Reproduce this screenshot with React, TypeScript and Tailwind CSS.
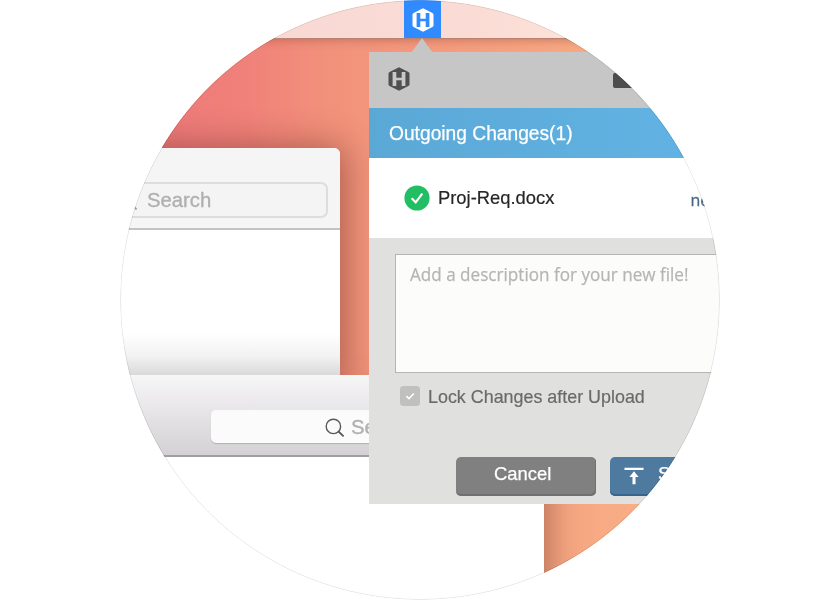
import React from "react";

function HexLogo({ color, letter, className }: { color: string; letter: string; className: string }) {
  return (
    <svg viewBox="0 0 22 24" className={className}>
      <path d="M11 0.2 20.4 5Q21.5 5.6 21.5 6.8V17.2Q21.5 18.4 20.4 19L11 23.8 1.6 19Q0.5 18.4 0.5 17.2V6.8Q0.5 5.6 1.6 5Z" fill={color} />
      <path d="M4.6 4.9H8.3V10.7H13.7V4.9H17.4V19.1H13.7V13.3H8.3V19.1H4.6Z" fill={letter} />
    </svg>
  );
}

function SearchGlyph({ className }: { className: string }) {
  return (
    <svg viewBox="0 0 20 20" className={className} fill="none" stroke="currentColor" strokeWidth="1.4">
      <circle cx="8.4" cy="8.4" r="7.2" />
      <path d="M13.5 13.5 18.6 18.4" strokeWidth="1.8" />
    </svg>
  );
}

function FinderWindow() {
  return (
    <div className="absolute -left-10 top-[148px] flex h-[232px] w-[259.5px] flex-col overflow-hidden rounded-t-[6px] bg-white shadow-[0_4px_34px_6px_rgba(80,30,20,0.42)]">
      <div className="flex h-[82px] shrink-0 items-start border-b-2 border-[#c3c3c3] bg-[#f5f5f5] pl-[42px] pt-[34px]">
        <div className="flex h-9 w-[206px] items-center rounded-[7px] border-2 border-[#dddddd] bg-[#f4f4f4]">
          <SearchGlyph className="-ml-1.5 mt-0.5 size-5 shrink-0 text-[#a0a0a0]" />
          <span className="ml-[9px] mt-px text-[20.3px] leading-none text-[#b0b0b0] [-webkit-text-stroke:0.35px_#b0b0b0]">Search</span>
        </div>
      </div>
      <div className="flex-1 bg-[linear-gradient(to_bottom,#fff_0,#fff_103px,#f2f2f2_126px,#d8d8d8_146px)]" />
    </div>
  );
}

function BrowserWindow() {
  return (
    <div className="absolute left-0 top-[374.5px] flex h-[225.5px] w-[424px] flex-col">
      {/* Shadow cast on the desktop to the right of the window */}
      <div className="absolute inset-0 -z-10 shadow-[0_30px_34px_0_rgba(80,30,20,0.5)]" />
      <div className="flex h-[82px] shrink-0 items-start border-b-2 border-[#a09fa0] bg-[linear-gradient(to_bottom,#f7f6f7,#e7e5e8_45%,#d3d1d4)] pl-[91px] pt-[35.5px]">
        <div className="flex h-[33px] w-[330px] items-center rounded-[5px] bg-[#fbfbfb] shadow-[0_1px_1px_rgba(0,0,0,0.18)]">
          <SearchGlyph className="ml-[113.5px] mt-0.5 size-5 shrink-0 text-[#58585a]" />
          <span className="ml-[6.5px] mt-0.5 text-[20.3px] leading-none text-[#b0b0b0] [-webkit-text-stroke:0.35px_#b0b0b0]">Search</span>
        </div>
      </div>
      <div className="flex-1 bg-white" />
    </div>
  );
}

function UploadPanel() {
  return (
    <div className="absolute left-[249px] top-[52px] flex h-[452px] w-[351px] flex-col overflow-x-clip bg-[#e0e0de]">
      <svg viewBox="0 0 22 15" className="absolute -top-[14px] left-[41.5px] h-[15px] w-[22px]">
        <path d="M11 0 22 15H0Z" fill="#c6c6c6" />
      </svg>
      <header className="flex h-[55.5px] shrink-0 items-center bg-[#c6c6c6] pl-[19px]">
        <HexLogo color="#505050" letter="#c9c9c9" className="mb-px h-6 w-[22px]" />
        <div className="ml-[203px] mt-[21px] h-[15px] w-10 self-start rounded-[2px] bg-[#4d4d4d]" />
      </header>
      <div className="flex h-[50.5px] shrink-0 items-center bg-[linear-gradient(to_right,#5aa8d6,#61b2e2_85%)] pl-5 text-[20px] text-white">
        <span className="origin-left scale-x-[0.96] [-webkit-text-stroke:0.25px_white]">Outgoing Changes(1)</span>
      </div>
      <div className="flex h-20 shrink-0 items-center bg-white pl-[35px]">
        <svg viewBox="0 0 26 26" className="size-[26px] shrink-0">
          <circle cx="13" cy="13" r="12.6" fill="#22be63" />
          <path d="M7.7 13.2 11.7 17.4 18.3 8.6" fill="none" stroke="#fff" strokeWidth="2.2" />
        </svg>
        <span className="ml-[7.5px] w-[253px] shrink-0 origin-left scale-x-[0.967] text-[19px] text-[#262626] [-webkit-text-stroke:0.2px_#262626]">Proj-Req.docx</span>
        <span className="mt-1 font-['Open_Sans',sans-serif] text-[16px] text-[#4a6887] [-webkit-text-stroke:0.3px_#4a6887]">new</span>
      </div>
      <div className="flex flex-1 flex-col pl-[26px] pt-4">
        <div className="h-[119px] w-[360px] border border-[#b5b5b5] bg-[#fcfcfa] pl-[14px] pt-[6px] font-['Open_Sans',sans-serif] text-[18px] text-[#b5b5b5]">
          <span className="inline-block origin-left scale-x-[0.95] whitespace-nowrap [-webkit-text-stroke:0.25px_#b5b5b5]">
            Add a description for your new file!
          </span>
        </div>
        <label className="ml-[5px] mt-[13px] flex h-5 items-center">
          <svg viewBox="0 0 20 20" className="size-5">
            <rect width="20" height="20" rx="3.5" fill="#c0c0bf" />
            <path d="M6.3 10.2 9 12.7 13.8 7.5" fill="none" stroke="#fff" strokeWidth="1.6" />
          </svg>
          <span className="ml-[7.5px] mt-0.5 origin-left scale-x-[0.967] whitespace-nowrap text-[18.5px] text-[#6a6a6a] [-webkit-text-stroke:0.2px_#6a6a6a]">Lock Changes after Upload</span>
        </label>
        <div className="ml-[61px] mt-[51px] flex gap-[14px] text-[19px] text-white">
          <button className="h-[38.5px] w-[140px] shrink-0 rounded-[5px] bg-[#808080] pb-[5px] pr-[6px] shadow-[inset_-1px_-2px_0_#707070]">
            <span className="inline-block scale-x-[0.97] [-webkit-text-stroke:0.25px_white]">Cancel</span>
          </button>
          <button className="flex h-[38.5px] w-[140px] shrink-0 items-center rounded-[5px] bg-[#4f7aa0] pl-[14px] shadow-[inset_0_-2px_0_#38658f]">
            <svg viewBox="0 0 20 18" className="mb-px h-[18px] w-5 shrink-0" fill="#fff">
              <path d="M0.5 0.8H19.5V3H0.5ZM10 4.2 14.6 10H11.5V17.2H8.5V10H5.4Z" />
            </svg>
            <span className="mb-1 ml-[14px] [-webkit-text-stroke:0.25px_white]">Submit</span>
          </button>
        </div>
      </div>
    </div>
  );
}

export default function App() {
  return (
    <main className="flex h-[600px] w-[840px] justify-center overflow-hidden bg-white font-['Liberation_Sans',Arial,sans-serif]">
      <div className="relative isolate size-[600px] overflow-hidden bg-[linear-gradient(to_right,#ee7a7a_8%,#f08079_20%,#f2917b_35%,#f59c7f_55%,#f7a883_75%,#f9b48b)] [mask-image:radial-gradient(circle_at_center,#000_299.4px,transparent_300.2px)]">
        <div className="flex h-[38px] justify-center bg-[linear-gradient(to_right,#f9d8d4_20%,#fadcd5_60%,#fde5db_80%)] pl-1 shadow-[0_1px_1px_#b98271,0_2px_9px_rgba(120,50,30,0.35)]">
          <div className="flex w-[37px] items-center justify-center bg-[#2f8bff] pl-px pt-px">
            <HexLogo color="#fff" letter="#2f8bff" className="h-6 w-[22px]" />
          </div>
        </div>
        <FinderWindow />
        <BrowserWindow />
        <UploadPanel />
        <div className="pointer-events-none absolute inset-0 rounded-full border border-black/10" />
      </div>
    </main>
  );
}
